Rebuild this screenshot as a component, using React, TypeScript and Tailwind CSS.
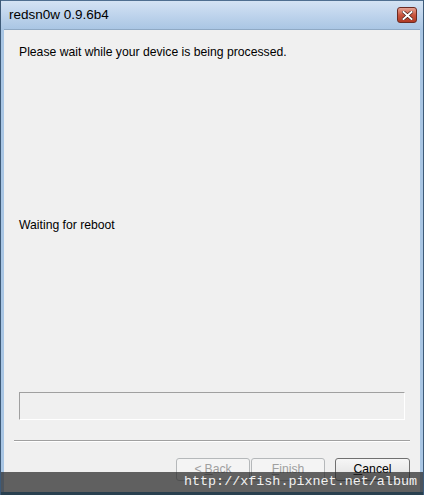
import React from "react";

export default function App() {
  const ui = { fontFamily: '"Liberation Sans", Arial, sans-serif' };
  return (
    <div className="relative w-[424px] h-[495px] flex flex-col bg-[#a9c6e4] border-x border-[#3d5a78] overflow-hidden" style={ui}>
      {/* Title bar */}
      <div className="h-[29px] flex items-center justify-between pl-[8px] pr-[6px] bg-gradient-to-b from-[#d4e3f3] via-[#bfd4ec] to-[#aac6e4] border-t border-[#4f6f90]">
        <span className="text-[13.5px] text-black leading-none">redsn0w 0.9.6b4</span>
        <div className="w-[20px] h-[16px] rounded-[3px] border border-[#6b2a22] bg-gradient-to-b from-[#e4a394] via-[#c9553f] to-[#b03a24] flex items-center justify-center">
          <svg width="11" height="9" viewBox="0 0 11 9">
            <path d="M1.5 1 L9.5 8 M9.5 1 L1.5 8" stroke="#3a1410" strokeWidth="3.2" strokeLinecap="square" />
            <path d="M1.5 1 L9.5 8 M9.5 1 L1.5 8" stroke="#ffffff" strokeWidth="2" strokeLinecap="square" />
          </svg>
        </div>
      </div>

      {/* Client area */}
      <div className="flex-1 mx-[3px] bg-[#f0f0f0] border-t border-[#8fa9c4] flex flex-col">
        <div className="mt-[15px] ml-[15px] h-[15px] leading-[15px] text-[12.2px] text-black">
          Please wait while your device is being processed.
        </div>
        <div className="mt-[158px] ml-[15px] h-[15px] leading-[15px] text-[12.2px] text-black">
          Waiting for reboot
        </div>
        <div className="mt-[159px] ml-[15px] w-[386px] h-[28px] border-t border-l border-[#a0a0a0] border-b border-r border-b-white border-r-white" />
        <div className="mt-[20px] ml-[10px] w-[396px] h-[2px] border-t border-[#a0a0a0] border-b border-b-white" />
        <div className="mt-[16px] flex pl-[172px]">
          <div className="w-[74px] h-[23px] rounded-[3px] border border-[#b5b8ba] bg-[#f4f4f4] flex items-center justify-center text-[12.2px] text-[#a0a0a0]">
            &lt; <span className="underline ml-[3px]">B</span>ack
          </div>
          <div className="ml-[1px] w-[74px] h-[23px] rounded-[3px] border border-[#b5b8ba] bg-[#f4f4f4] flex items-center justify-center text-[12.2px] text-[#a0a0a0]">
            <span className="underline">F</span>inish
          </div>
          <div className="ml-[10px] w-[75px] h-[23px] rounded-[3px] border border-[#707070] bg-gradient-to-b from-[#f6f6f6] via-[#ebebeb] to-[#d9d9d9] flex items-center justify-center text-[12.2px] text-black">
            <span className="underline">C</span>ancel
          </div>
        </div>
      </div>

      {/* Bottom frame */}
      <div className="h-[3px] bg-[#29404f]" />

      {/* Watermark overlay */}
      <div className="absolute left-0 right-0 bottom-[3px] h-[20px] bg-[rgba(40,40,40,0.72)] flex items-center justify-end pr-[6px]">
        <span className="text-[13.4px] text-[#f2f2f2] leading-none" style={{ fontFamily: '"Liberation Mono", "Courier New", monospace' }}>
          http://xfish.pixnet.net/album
        </span>
      </div>
    </div>
  );
}
